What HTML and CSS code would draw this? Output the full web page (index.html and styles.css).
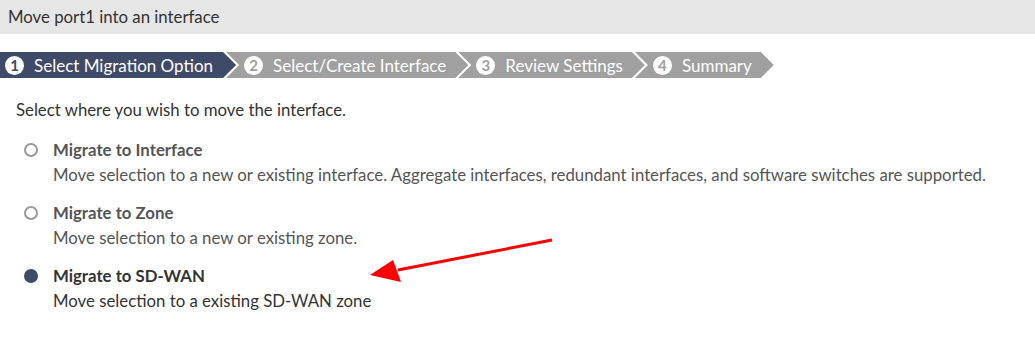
FILE: index.html
```html
<!DOCTYPE html>
<html>
<head>
    <meta charset="utf-8">
    <title>Move port1 into an interface</title>
    <link rel="stylesheet" href="styles.css">
</head>
<body>
    <div class="dialog">
        <div class="dialog-header">Move port1 into an interface</div>

        <div class="wizard">
            <div class="step active"><span class="num">1</span>Select Migration Option</div>
            <div class="step"><span class="num">2</span>Select/Create Interface</div>
            <div class="step"><span class="num">3</span>Review Settings</div>
            <div class="step last"><span class="num">4</span>Summary</div>
        </div>

        <div class="content">
            <p class="intro">Select where you wish to move the interface.</p>

            <div class="option">
                <span class="radio"></span>
                <div class="option-text">
                    <div class="option-title">Migrate to Interface</div>
                    <div class="option-desc">Move selection to a new or existing interface. Aggregate interfaces, redundant interfaces, and software switches are supported.</div>
                </div>
            </div>
            <div class="option">
                <span class="radio"></span>
                <div class="option-text">
                    <div class="option-title">Migrate to Zone</div>
                    <div class="option-desc">Move selection to a new or existing zone.</div>
                </div>
            </div>
            <div class="option selected">
                <span class="radio"></span>
                <div class="option-text">
                    <div class="option-title">Migrate to SD-WAN</div>
                    <div class="option-desc">Move selection to a existing SD-WAN zone</div>
                </div>
            </div>

            <!-- annotation arrow -->
            <svg class="pointer" width="200" height="50" viewBox="0 0 200 50">
                <line x1="182" y1="3" x2="28" y2="33" stroke="#ff0000" stroke-width="3"/>
                <polygon points="0,38 23,23 31,45" fill="#ff0000"/>
            </svg>
        </div>
    </div>
</body>
</html>
```

FILE: styles.css
```css
body {
    margin: 0;
    font-family: Lato, "Open Sans", Arial, sans-serif;
    font-size: 16.8px;
    color: #333333;
    background: #ffffff;
}
.dialog-header {
    background-color: #e6e6e6;
    height: 34px;
    line-height: 34px;
    padding-left: 8px;
    color: #333333;
}
.wizard {
    display: flex;
    margin-top: 18px;
    height: 26px;
}
.step {
    display: flex;
    align-items: center;
    gap: 10px;
    height: 26px;
    background-color: #a0a0a0;
    color: #ffffff;
    font-size: 17px;
    padding: 0 22px 0 18px;
    margin-left: -10px;
    clip-path: polygon(0 0, calc(100% - 13px) 0, 100% 50%, calc(100% - 13px) 100%, 0 100%, 13px 50%);
    white-space: nowrap;
}
.step.active {
    background-color: #3e4a67;
    margin-left: 0;
    padding-left: 5px;
    padding-right: 23px;
    clip-path: polygon(0 0, calc(100% - 13px) 0, 100% 50%, calc(100% - 13px) 100%, 0 100%);
}
.step .num {
    display: inline-flex;
    align-items: center;
    justify-content: center;
    width: 19px;
    height: 19px;
    border-radius: 50%;
    background-color: #ffffff;
    color: #a0a0a0;
    font-size: 15px;
    font-weight: bold;
}
.step.active .num {
    color: #3e4a67;
}
.content {
    position: relative;
    padding: 0 16px;
}
.intro {
    margin: 20px 0 15px 0;
    line-height: 24px;
}
.option {
    display: flex;
    align-items: flex-start;
    margin-bottom: 13px;
    padding-left: 8px;
}
.radio {
    flex: none;
    width: 10px;
    height: 10px;
    border: 2px solid #999999;
    border-radius: 50%;
    margin-top: 6px;
    margin-right: 15px;
}
.option.selected .radio {
    width: 14px;
    height: 14px;
    border: none;
    background-color: #3e4a67;
    margin-top: 6px;
}
.option-title {
    font-weight: bold;
    color: #555555;
    line-height: 25px;
}
.option.selected .option-title {
    color: #333333;
}
.option-desc {
    color: #555555;
    line-height: 25px;
}
.option.selected .option-desc {
    color: #333333;
}
.pointer {
    position: absolute;
    left: 370px;
    top: 139px;
}
```
